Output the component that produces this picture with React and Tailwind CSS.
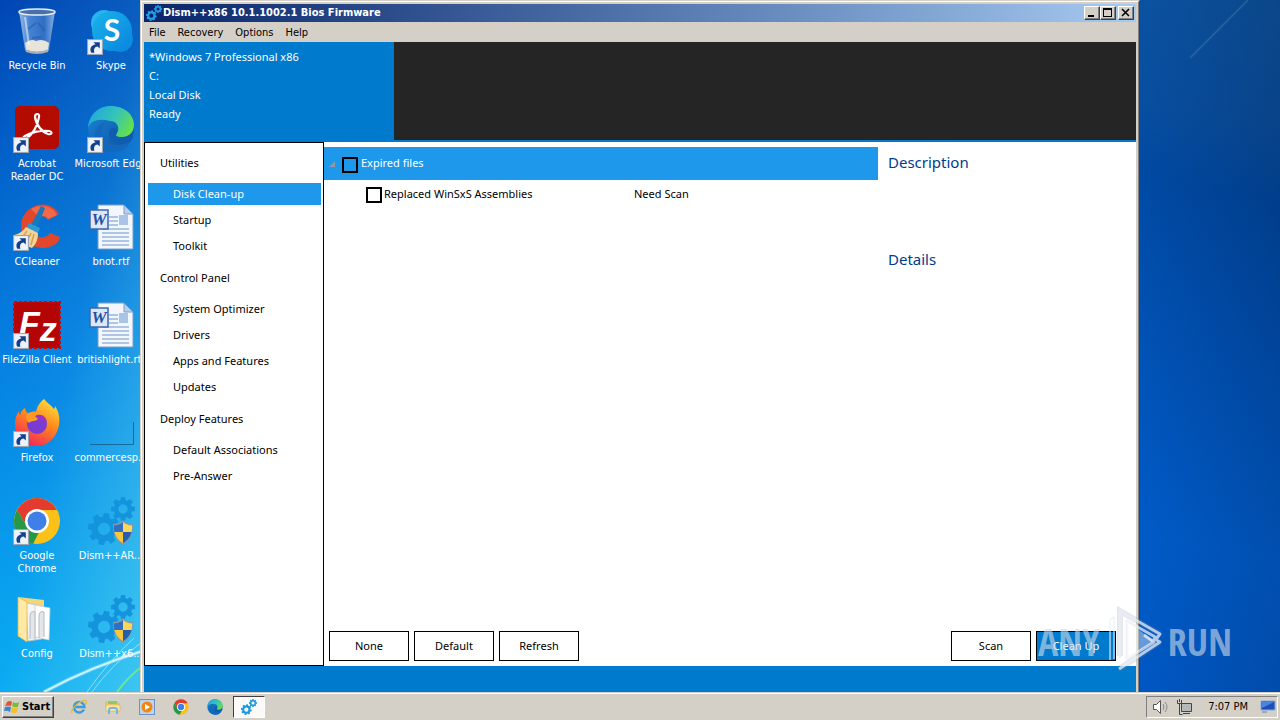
import React, { useState } from "react";

const UI_FONT = "font-['DejaVu_Sans_Condensed','DejaVu_Sans',sans-serif]";
const APP_FONT = "font-['Noto_Sans','Open_Sans',sans-serif]";

// Sidebar sections
const SECTIONS = [
  { title: "Utilities", items: ["Disk Clean-up", "Startup", "Toolkit"] },
  {
    title: "Control Panel",
    items: ["System Optimizer", "Drivers", "Apps and Features", "Updates"],
  },
  { title: "Deploy Features", items: ["Default Associations", "Pre-Answer"] },
];

function RingGear({ cx, cy, r, color, turn = 0 }) {
  return (
    <g transform={`translate(${cx} ${cy}) rotate(${turn})`}>
      <circle r={r * 0.58} fill="none" stroke={color} strokeWidth={r * 0.38} />
      {[0, 45, 90, 135, 180, 225, 270, 315].map((a) => (
        <path
          key={a}
          d={`M${-r * 0.22} ${-r * 0.68} L${-r * 0.17} ${-r} H${r * 0.17} L${r * 0.22} ${-r * 0.68} Z`}
          fill={color}
          transform={`rotate(${a})`}
        />
      ))}
    </g>
  );
}

function GearsIcon({ className, color = "#1c9ade" }) {
  return (
    <svg viewBox="0 0 48 48" className={className} aria-hidden="true">
      <RingGear cx={16} cy={32} r={16} color={color} turn={10} />
      <RingGear cx={36} cy={12} r={12} color={color} />
    </svg>
  );
}

function DismIcon() {
  return (
    <svg viewBox="0 0 48 48" className="size-12" aria-hidden="true">
      <RingGear cx={17} cy={32} r={16} color="#1494dc" turn={10} />
      <RingGear cx={36} cy={12} r={12} color="#1494dc" />
      <path d="M36 23c3 3 6 4 10 4 0 9-2 16-10 21-8-5-10-12-10-21 4 0 7-1 10-4z" fill="#8a98a4" />
      <path d="M36 25v10h-8.500c-.5-2-.6-4-.6-6.500 3.600 0 6.600-1.200 9.100-3.500z" fill="#2f6fc4" />
      <path d="M36 25v10h8.500c.5-2 .6-4 .6-6.500-3.600 0-6.600-1.200-9.100-3.500z" fill="#fbd65a" />
      <path d="M36 46V35h-8.500c1.300 5 4 8.500 8.500 11z" fill="#f7c83e" />
      <path d="M36 46V35h8.500c-1.300 5-4 8.500-8.500 11z" fill="#235fae" />
    </svg>
  );
}

function RecycleIcon() {
  return (
    <svg viewBox="0 0 48 48" className="size-12" aria-hidden="true">
      <defs>
        <linearGradient id="bin" x1="0" x2="1">
          <stop offset="0" stopColor="#c4dcf2" />
          <stop offset=".3" stopColor="#5c93d8" />
          <stop offset=".7" stopColor="#3f78c8" />
          <stop offset="1" stopColor="#b4cfee" />
        </linearGradient>
      </defs>
      <path d="M6 4h36l-6 39q-12 5-24 0z" fill="url(#bin)" opacity=".75" />
      <path d="M12 36q6-5 11-2 7-3 13 2l-1 7q-11 4-22 0z" fill="#e8e4da" />
      <path d="M12 42q12 5 24 0l-1 3q-11 4-22 0z" fill="#a8aeb4" />
      <ellipse cx="24" cy="5" rx="18" ry="3" fill="#4a70a8" stroke="#e4edf4" strokeWidth="1.500" />
      <path d="M15 22l8-6m2 0l7 8m-3 6l-10 1" stroke="#2b5fb4" strokeWidth="2" fill="none" opacity=".7" />
      <path d="M12 10l4 28" stroke="#fff" strokeWidth="2" opacity=".5" />
    </svg>
  );
}

function SkypeIcon() {
  return (
    <svg viewBox="0 0 48 48" className="size-12" aria-hidden="true">
      <defs>
        <linearGradient id="skype" x1="0" x2="1" y1="0" y2="1">
          <stop offset="0" stopColor="#1ab4ec" />
          <stop offset="1" stopColor="#0a84dc" />
        </linearGradient>
      </defs>
      <circle cx="17" cy="16" r="13" fill="#28b4ee" />
      <circle cx="33" cy="32" r="13" fill="#0a8ce0" />
      <circle cx="25" cy="24" r="20" fill="url(#skype)" />
      <text x="25" y="34" textAnchor="middle" fill="#fff" fontSize="30" fontWeight="700" fontFamily="Lato, sans-serif">
        S
      </text>
    </svg>
  );
}

function AcrobatIcon() {
  return (
    <svg viewBox="0 0 48 48" className="size-12" aria-hidden="true">
      <rect x="2" y="1" width="44" height="43" rx="5" fill="#b30b00" />
      <path
        d="M22 12c0-4 5-4 4 0-1 9-7 18-13 22-3 2-4-1-1-3 6-4 17-6 24-5 4 1 3 4-1 3-6-2-12-9-13-17z"
        fill="none"
        stroke="#fff"
        strokeWidth="2.200"
        strokeLinejoin="round"
      />
    </svg>
  );
}

function EdgeIcon({ className = "size-12" }) {
  return (
    <svg viewBox="0 0 48 48" className={className} aria-hidden="true">
      <defs>
        <linearGradient id="edgeTop" x1="0" x2="1" y1=".2" y2=".6">
          <stop offset="0" stopColor="#1fa6e0" />
          <stop offset=".55" stopColor="#35c4b8" />
          <stop offset="1" stopColor="#66e04a" />
        </linearGradient>
        <linearGradient id="edgeLow" x1="0" x2="1" y1="0" y2="1">
          <stop offset="0" stopColor="#1b86d6" />
          <stop offset="1" stopColor="#0c4ea0" />
        </linearGradient>
      </defs>
      <circle cx="24" cy="24" r="23" fill="url(#edgeLow)" />
      <path
        d="M1 23C2 8 13 1 24 1c14 0 23 9 23 19 0 8-6 12-12 12-6 0-7-2-5-4 3-4 1-12-7-12C13 13 3 15 1 23z"
        fill="url(#edgeTop)"
      />
      <path d="M19 17c-5 4-5 12-1 17 6 8 18 7 26 2-4 8-11 12-20 11C13 46 6 37 8 28c1-6 6-10 11-11z" fill="#1468bc" />
      <path d="M30 28c-3 4 0 7 7 6 5-1 8-3 9-6 1 5-2 8-5 9-9 3-19 0-19-8 0-3 1-5 3-6 4-1 6 2 5 5z" fill="#0f5cb0" />
    </svg>
  );
}

function CCleanerIcon() {
  return (
    <svg viewBox="0 0 48 48" className="size-12" aria-hidden="true">
      <path
        d="M46 11C41 2 30-1 20 4 8 10 5 24 11 34c6 11 20 14 30 8 4-2 6-6 6-8l-10-4c-4 6-13 6-16-1-3-6-1-13 5-15 4-2 7 0 9 3z"
        fill="#e2472c"
      />
      <path d="M44 12L35 16c-2-3-5-4-9-2l-8-8c10-6 22-3 26 6z" fill="#f2694a" />
      <path d="M28 3l4 2-8 20-6-3z" fill="#1878bc" />
      <path d="M16 20l11 5-2 5-12-5z" fill="#2b9ad8" />
      <path d="M13 24l12 6c0 8-3 12-6 15C12 43 5 38 1 32c5-1 9-4 12-8z" fill="#f2d49a" />
      <path d="M14 28l-6 8m10-6l-5 10m8-9l-3 11" stroke="#d8a24c" strokeWidth="1.500" />
    </svg>
  );
}

function FileZillaIcon() {
  return (
    <svg viewBox="0 0 48 48" className="size-12" aria-hidden="true">
      <rect x="1" y="1" width="46" height="46" fill="#b40404" stroke="#c00c0c" strokeWidth="2" strokeDasharray="3 2" />
      <text x="6" y="34" fill="#fff" fontSize="34" fontWeight="700" fontStyle="italic" fontFamily="Liberation Sans">
        F<tspan dy="6">z</tspan>
      </text>
    </svg>
  );
}

function WordIcon() {
  return (
    <svg viewBox="0 0 48 48" className="size-12" aria-hidden="true">
      <path d="M11 2h26l9 9v35H11z" fill="#f2f7fd" stroke="#7d9cc8" />
      <path d="M37 2v9h9z" fill="#b8cfea" stroke="#7d9cc8" />
      <path
        d="M22 14h9M22 18h9M22 22h9M15 26h27M15 30h27M15 34h27M15 38h27M15 42h27"
        stroke="#6f94cc"
        strokeWidth="1.200"
      />
      <rect x="32" y="12" width="9" height="10" fill="#a9c4e6" />
      <rect x="3" y="7" width="18" height="19" fill="#dce8f8" stroke="#3d64b0" strokeWidth="1.500" />
      <text x="12" y="22" textAnchor="middle" fill="#2450a4" fontSize="17" fontWeight="700" fontStyle="italic" fontFamily="Liberation Serif">
        W
      </text>
    </svg>
  );
}

function FirefoxIcon() {
  return (
    <svg viewBox="0 0 48 48" className="size-12" aria-hidden="true">
      <defs>
        <linearGradient id="fox" x1=".8" x2=".3" y1="0" y2="1">
          <stop offset="0" stopColor="#ffe23c" />
          <stop offset=".45" stopColor="#ff8a1c" />
          <stop offset="1" stopColor="#f2245c" />
        </linearGradient>
      </defs>
      <path
        d="M31 0c3 4 7 6 10 10 1-1 1-2 1-3 4 6 5 12 4 19-2 12-11 21-22 21C11 47 2 38 2 26c0-6 1-10 4-14 0 2 0 3 1 4 1-4 3-6 5-7 0 3 2 5 4 5l7 1C23 9 26 4 31 0z"
        fill="url(#fox)"
      />
      <circle cx="24" cy="25" r="10" fill="#7a3cd0" />
      <path d="M16 14c3-2 8-2 11 0 5 1 8 5 7 9-3-4-6-3-9-3-3 3-6 1-9 4-3-3-4-7 0-10z" fill="#ff9a24" />
      <path d="M22 17c5-3 12 0 12 7-2-2-5-4-8-3z" fill="#9a34c8" />
    </svg>
  );
}

function ChromeIcon({ className = "size-12" }) {
  return (
    <svg viewBox="0 0 48 48" className={className} aria-hidden="true">
      <circle cx="24" cy="24" r="23" fill="#fbc116" />
      <path d="M24 1a23 23 0 0 1 20 12H24a11 11 0 0 0-10 16L4 13A23 23 0 0 1 24 1z" fill="#e33b2e" />
      <path d="M4 13l10.500 17A11 11 0 0 0 26 35l-6 12A23 23 0 0 1 4 13z" fill="#269847" />
      <circle cx="24" cy="24" r="12" fill="#fff" />
      <circle cx="24" cy="24" r="9.500" fill="#3f7fe8" />
    </svg>
  );
}

function FolderIcon() {
  return (
    <svg viewBox="0 0 48 48" className="size-12" aria-hidden="true">
      <path d="M5 2l26 3v38l-17 3L5 41z" fill="#f3d67c" />
      <path d="M13 8l16 3v33l-14 2z" fill="#f6f6f6" stroke="#c2c2c2" strokeWidth=".8" />
      <path d="M22 10l15 3-1 32-14-3z" fill="#fff" stroke="#c8ccd2" strokeWidth=".8" />
      <path d="M17 44V22q0-7 5-5v28M26 43V22q0-7 5-5v25" fill="#e3e6ea" stroke="#b4bcc6" />
      <path d="M5 2l9 5v40l-9-6z" fill="#ffe9a6" stroke="#dcb850" strokeWidth=".8" />
    </svg>
  );
}

function BlankIcon() {
  return (
    <svg viewBox="0 0 48 48" className="size-12" aria-hidden="true">
      <path d="M3 45.500h43.500V23" fill="none" stroke="#146a98" />
    </svg>
  );
}

function ShortcutBadge() {
  return (
    <svg viewBox="0 0 15 15" className="absolute bottom-0 left-0 size-4" aria-hidden="true">
      <rect x=".5" y=".5" width="14" height="14" fill="#eef3fa" stroke="#9aa6b4" />
      <path d="M4 13c-2-4 0-7 4-8L6 3h6v6L10 7c-3 0-4 3-3 6z" fill="#153f8c" />
    </svg>
  );
}

// Desktop icons, row by row
const DESKTOP = [
  { name: "Recycle Bin", Icon: RecycleIcon },
  { name: "Skype", Icon: SkypeIcon, shortcut: true },
  { name: "Acrobat Reader DC", Icon: AcrobatIcon, shortcut: true, wrap: true },
  { name: "Microsoft Edge", Icon: EdgeIcon, shortcut: true },
  { name: "CCleaner", Icon: CCleanerIcon, shortcut: true },
  { name: "bnot.rtf", Icon: WordIcon },
  { name: "FileZilla Client", Icon: FileZillaIcon, shortcut: true },
  { name: "britishlight.rtf", Icon: WordIcon },
  { name: "Firefox", Icon: FirefoxIcon, shortcut: true },
  { name: "commercesp...", Icon: BlankIcon },
  { name: "Google Chrome", Icon: ChromeIcon, shortcut: true, wrap: true },
  { name: "Dism++AR...", Icon: DismIcon },
  { name: "Config", Icon: FolderIcon },
  { name: "Dism++x6...", Icon: DismIcon },
];

function DesktopIcon({ item }) {
  const { Icon } = item;
  return (
    <button type="button" className="flex h-[98px] flex-col items-center gap-1 text-[11px] leading-[13px] text-white">
      <span className="relative">
        <Icon />
        {item.shortcut && <ShortcutBadge />}
      </span>
      <span className={item.wrap ? "w-16" : "whitespace-nowrap"}>{item.name}</span>
    </button>
  );
}

function Wallpaper() {
  return (
    <div className="absolute inset-0 bg-linear-to-b from-[#0046b4] via-[#0078e0] to-[#00a8f4]">
      <div className="absolute inset-y-0 left-0 w-36 bg-linear-to-tl from-[#58d4f0]/70 via-[#30bcec]/20 to-transparent" />
      <div className="absolute inset-y-0 right-0 w-[142px] bg-[linear-gradient(192deg,#104c88_0%,#0b4688_18%,#003f8c_28%,#004aa4_50%,#0058c0_78%,#0052b8_100%)]" />
      <div className="absolute inset-y-0 right-0 w-[142px] bg-linear-to-r from-[#0064dc]/30 to-[#003a88]/30" />
      <svg viewBox="0 0 146 60" className="absolute bottom-0 left-0 h-15 w-[146px]" fill="none" aria-hidden="true">
        <path d="M44 60Q90 35 146 18" stroke="#c8f4ff" strokeWidth="4" opacity=".35" />
        <path d="M44 60Q90 35 146 18" stroke="#e8fcff" strokeWidth="2" opacity=".8" />
        <path d="M87 60Q108 30 134 6M92 60Q112 32 142 10" stroke="#c8f4ff" opacity=".6" />
        <path d="M117 60Q130 42 146 32" stroke="#6ce88c" strokeWidth="2" />
      </svg>
      <svg viewBox="0 0 90 70" className="absolute top-0 right-0 h-[70px] w-[90px]" fill="none" aria-hidden="true">
        <path d="M0 58L58 0" stroke="#6a9cd0" strokeWidth="2" opacity=".25" />
      </svg>
    </div>
  );
}

const BEVEL =
  "border border-t-white border-l-white border-r-[#404040] border-b-[#404040] bg-[#d4d0c8] shadow-[inset_-1px_-1px_0_#808080]";

function TitleBar() {
  return (
    <div className="flex h-[18px] items-center bg-linear-to-r from-[#0a246a] to-[#a6caf0] px-0.5">
      <GearsIcon className="size-4" color="#20a0e8" />
      <h1 className="flex-1 pl-px text-[11px] leading-4 font-bold whitespace-nowrap text-white">
        Dism++x86 10.1.1002.1 Bios Firmware
      </h1>
      <button type="button" aria-label="Minimize" className={`h-3.5 w-4 ${BEVEL}`}>
        <svg viewBox="0 0 14 12" className="h-3 w-3.5">
          <path d="M3 8h6v2H3z" />
        </svg>
      </button>
      <button type="button" aria-label="Maximize" className={`mr-0.5 h-3.5 w-4 ${BEVEL}`}>
        <svg viewBox="0 0 14 12" className="h-3 w-3.5">
          <path d="M2 1h9v9H2zM3 3v6h7V3z" fillRule="evenodd" />
        </svg>
      </button>
      <button type="button" aria-label="Close" className={`h-3.5 w-4 ${BEVEL}`}>
        <svg viewBox="0 0 14 12" className="h-3 w-3.5">
          <path d="M3 2l7 7M10 2l-7 7" stroke="#000" strokeWidth="1.600" />
        </svg>
      </button>
    </div>
  );
}

function Sidebar({ current, onSelect }) {
  return (
    <nav className="w-[180px] shrink-0 border border-black bg-white pt-px">
      {SECTIONS.map((section) => (
        <div key={section.title}>
          <h2 className="pl-[15px] leading-[37px]">{section.title}</h2>
          <ul className="pr-0.5 pl-[3px]">
            {section.items.map((item) => (
              <li key={item} className="py-0.5">
                <button
                  type="button"
                  onClick={() => onSelect(item)}
                  className={`block w-full pl-[25px] text-left leading-[22px] ${
                    item === current ? "bg-[#1e98ea] text-white" : ""
                  }`}
                >
                  {item}
                </button>
              </li>
            ))}
          </ul>
        </div>
      ))}
    </nav>
  );
}

const CHECKBOX = "mt-0.5 size-4 shrink-0 appearance-none border-2 border-black checked:bg-black";

function CleanupList() {
  return (
    <ul className="mt-[5px] flex-1">
      <li>
        <div className="flex h-[33px] items-center bg-[#1e98ea] pl-[5px] text-white">
          <svg viewBox="0 0 6 6" className="mr-[7px] size-1.5" aria-hidden="true">
            <path d="M6 0v6H0z" fill="#8c9aa4" />
          </svg>
          <label className="flex items-center gap-[3px]">
            <input type="checkbox" className={CHECKBOX} />
            Expired files
          </label>
        </div>
        <ul>
          <li className="flex h-7 items-center pl-[42px]">
            <label className="flex w-[268px] items-center gap-0.5">
              <input type="checkbox" className={CHECKBOX} />
              Replaced WinSxS Assemblies
            </label>
            <span>Need Scan</span>
          </li>
        </ul>
      </li>
    </ul>
  );
}

function AppButton({ children, primary }) {
  return (
    <button
      type="button"
      className={`h-[30px] w-20 border border-black ${primary ? "bg-[#007acc] text-white" : "bg-white"}`}
    >
      {children}
    </button>
  );
}

function DismWindow() {
  const [current, setCurrent] = useState("Disk Clean-up");

  return (
    <main className="absolute inset-y-0 right-[140px] left-[140px] flex flex-col border-x border-t border-[#d4d0c8] border-r-[#404040] bg-[#d4d0c8]">
      <div className="flex flex-1 flex-col border-x border-t border-white border-r-[#808080] px-0.5 pt-0.5">
        <TitleBar />
        <div className="flex h-5 items-center gap-3 pt-0.5 pl-[5px] text-[11px]">
          <button type="button">File</button>
          <button type="button">Recovery</button>
          <button type="button">Options</button>
          <button type="button">Help</button>
        </div>

        <div className={`flex flex-1 flex-col bg-[#007acc] text-[11px] ${APP_FONT}`}>
          {/* Image list */}
          <header className="flex h-[100px] pb-0.5">
            <div className="w-[250px] pt-[5px] pl-[5px] leading-[19px] text-white">
              <p>*Windows 7 Professional x86</p>
              <p>C:</p>
              <p>Local Disk</p>
              <p>Ready</p>
            </div>
            <div className="flex-1 bg-[#252526]" />
          </header>

          <div className="flex flex-1 bg-white">
            <Sidebar current={current} onSelect={setCurrent} />
            <section className="flex flex-1 flex-col">
              <div className="flex flex-1">
                <CleanupList />
                <aside className="w-[258px] pt-[7px] pl-2.5 text-[15px] leading-[26px] text-[#003c8c]">
                  <h2 className="h-[97px]">Description</h2>
                  <h2>Details</h2>
                </aside>
              </div>
              <div className="flex gap-[5px] pr-5 pb-[5px] pl-[5px]">
                <AppButton>None</AppButton>
                <AppButton>Default</AppButton>
                <AppButton>Refresh</AppButton>
                <div className="flex-1" />
                <AppButton>Scan</AppButton>
                <AppButton primary>Clean Up</AppButton>
              </div>
            </section>
          </div>
          <div className="h-[26px]" />
        </div>
      </div>
    </main>
  );
}

function Watermark() {
  return (
    <div className="pointer-events-none absolute right-12 bottom-4 flex h-[70px] items-center gap-1.5 font-['Open_Sans_Condensed','Roboto_Condensed','Liberation_Sans_Narrow',sans-serif] text-[38px] leading-none font-light text-[#d0dcea]/60">
      <span>ANY</span>
      <svg viewBox="0 0 56 70" className="h-[70px] w-14" fill="none" aria-hidden="true">
        <g stroke="#7c8894" strokeOpacity=".2" strokeWidth="6">
          <path d="M14 50V5l40 23M13 63l41-27" />
        </g>
        <g stroke="#e8eef6" strokeOpacity=".75" strokeWidth="3" strokeLinejoin="round">
          <path d="M4 54V14l4-3v42" strokeWidth="1.500" />
          <path d="M14 52V5l40 23-3 4-30-17v38l27-17-10-7M13 63l41-27-7-4" />
        </g>
        <path d="M21 15v38l27-18z" fill="#fff" fillOpacity=".4" />
      </svg>
      <span>RUN</span>
    </div>
  );
}

function ExplorerGlyph() {
  return (
    <svg viewBox="0 0 16 16" className="size-4" aria-hidden="true">
      <path d="M1 3h5l1 1h7v5H1z" fill="#f2d272" stroke="#c8a84c" strokeWidth=".6" />
      <path d="M3 2h9v3H3z" fill="#8cc86c" />
      <path d="M1 6h14v6H1z" fill="#fae8a4" stroke="#d0b050" strokeWidth=".6" />
      <path d="M4 15V11q0-2 2-2h4q2 0 2 2v4" fill="none" stroke="#78b4dc" strokeWidth="2" />
    </svg>
  );
}

function IeGlyph() {
  return (
    <svg viewBox="0 0 16 16" className="size-4" fill="none" aria-hidden="true">
      <path d="M13 10.500A5.300 5.300 0 1 1 13.500 8H4" stroke="#3c9cdc" strokeWidth="2.400" />
      <path d="M1 14C-1 10 12-1 15 2c1 1 0 3-1 4" stroke="#e8b838" strokeWidth="1.300" />
    </svg>
  );
}

function MediaGlyph() {
  return (
    <svg viewBox="0 0 16 16" className="size-4" aria-hidden="true">
      <rect x=".5" y=".5" width="15" height="15" fill="#bcd4ec" stroke="#6c94c0" />
      <circle cx="8" cy="8" r="5.500" fill="#f48414" />
      <path d="M6 5l5 3-5 3z" fill="#fff" />
    </svg>
  );
}

function Taskbar() {
  return (
    <footer className="flex h-7 shrink-0 items-center border-t border-[#d4d0c8] bg-[#d4d0c8] px-0.5 pt-px text-[11px] shadow-[inset_0_1px_0_#fff]">
      <button type="button" className={`flex h-[22px] w-[52px] items-center gap-0.5 pl-px ${BEVEL}`}>
        <svg viewBox="0 0 16 16" className="size-4 shrink-0" aria-hidden="true">
          <path d="M3 3q3-2 5 0L7 7Q4 6 1 7z" fill="#e8502c" />
          <path d="M9 3q3 2 6 0l-1 5q-3 1-6-1z" fill="#7cb83c" />
          <path d="M1 8q3-1 6 0l-1 5q-3-2-6-1z" fill="#3c84d4" />
          <path d="M8 8q3 2 6 1l-1 4q-3 2-6 0z" fill="#f4c024" />
        </svg>
        <span className="font-bold">Start</span>
      </button>
      <div className="flex items-center gap-[18px] pr-2.5 pl-[17px]">
        <button type="button" aria-label="Internet Explorer"><IeGlyph /></button>
        <button type="button" aria-label="Explorer"><ExplorerGlyph /></button>
        <button type="button" aria-label="Media Player"><MediaGlyph /></button>
        <button type="button" aria-label="Chrome"><ChromeIcon className="size-4" /></button>
        <button type="button" aria-label="Edge"><EdgeIcon className="size-4" /></button>
      </div>
      <button
        type="button"
        aria-label="Dism++"
        className="flex h-[22px] w-8 items-center justify-center border border-t-[#404040] border-r-white border-b-white border-l-[#404040] bg-[#fbfaf8]"
      >
        <GearsIcon className="size-4" />
      </button>
      <div className="ml-auto flex h-[22px] items-center border border-t-[#808080] border-r-white border-b-white border-l-[#808080] pr-px pl-[5px]">
        <svg viewBox="0 0 18 16" className="h-4 w-[18px]" fill="none" stroke="#555" aria-hidden="true">
          <path d="M1.500 5.500h3l4-4v13l-4-4h-3z" fill="#fff" />
          <path d="M11 5q2 3 0 6M13 3q4 5 0 10" stroke="#888" />
        </svg>
        <svg viewBox="0 0 16 16" className="ml-1.5 size-4" fill="none" stroke="#444" aria-hidden="true">
          <path d="M5.500 4.500h10v8h-10z" fill="#b4b8b8" />
          <path d="M7 14.500h7M1.500 1v3.500h4V1M3.500 0v3M3.500 5v10.500h3" />
        </svg>
        <time className="pr-3 pl-4">7:07 PM</time>
        <svg viewBox="0 0 16 14" className="h-3.5 w-4" aria-hidden="true">
          <path d="M1 1h14v9H1z" fill="#1c50b8" stroke="#86a8dc" />
          <path d="M2 2h12L2 8z" fill="#4c84dc" />
          <path d="M2 12h5" stroke="#6484a8" />
        </svg>
      </div>
    </footer>
  );
}

function App() {
  return (
    <div className={`flex h-screen flex-col overflow-hidden text-black ${UI_FONT}`}>
      <div className="relative min-h-0 flex-1">
        <Wallpaper />
        <div className="relative grid w-[148px] grid-cols-2 pt-[7px]">
          {DESKTOP.map((item) => (
            <DesktopIcon key={item.name} item={item} />
          ))}
        </div>
        <DismWindow />
        <Watermark />
      </div>
      <Taskbar />
    </div>
  );
}

export default App;
